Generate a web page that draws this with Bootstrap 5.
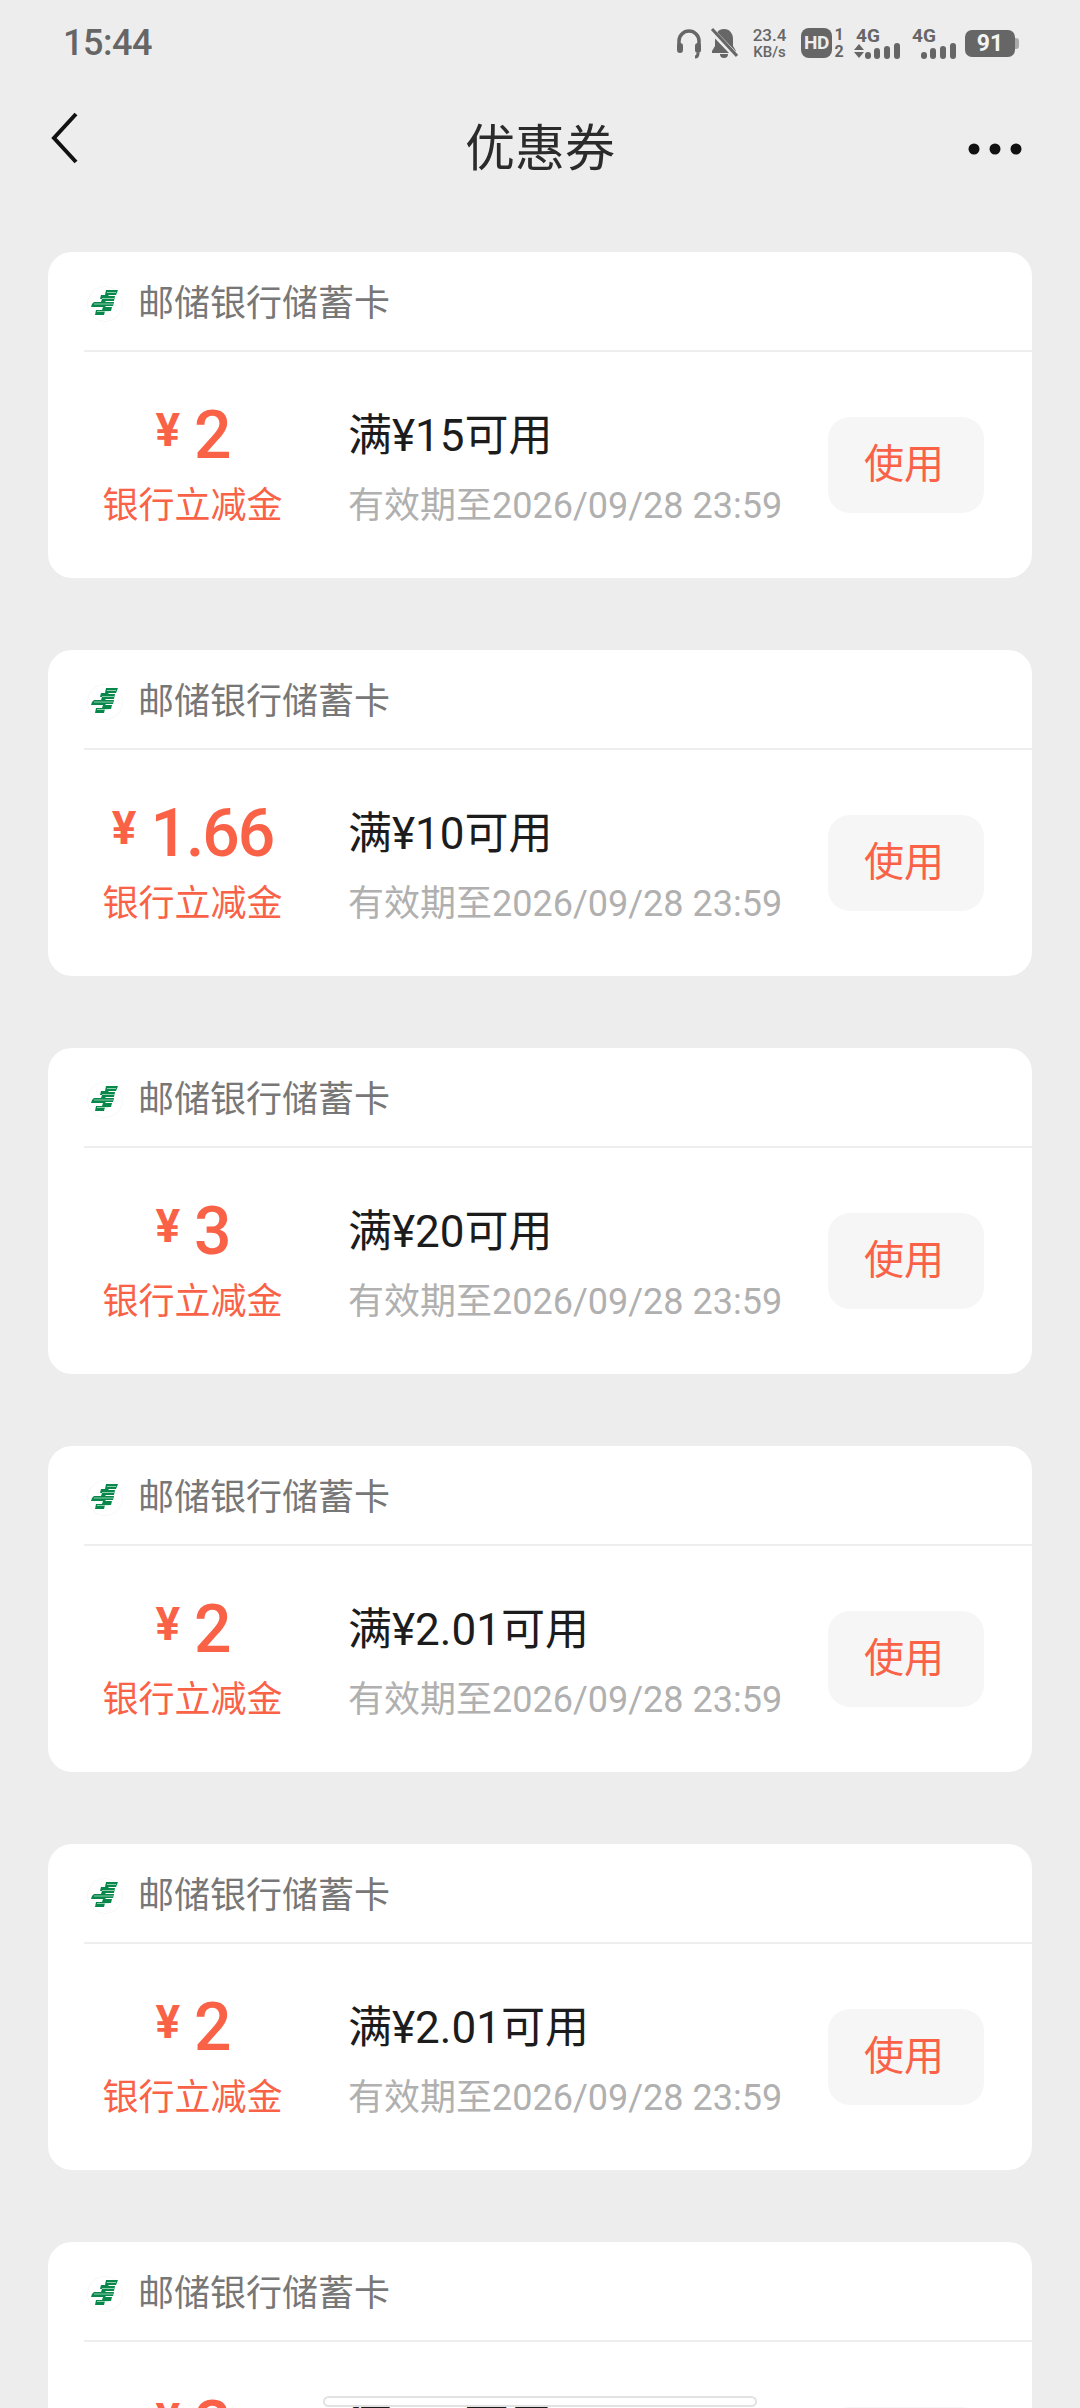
<!DOCTYPE html>
<html lang="zh">

<head>
    <meta charset="utf-8">
    <title>优惠券</title>
    <link href="https://cdn.jsdelivr.net/npm/bootstrap@5.3.0/dist/css/bootstrap.min.css" rel="stylesheet">
    <style>
        body {
            width: 1080px;
            height: 2408px;
            overflow: hidden;
            background: #ededed;
            font-family: Roboto, "Noto Sans CJK SC", sans-serif;
        }

        .status-bar {
            height: 84px;
            padding: 0 61px 0 63px;
            color: #666;
        }

        .status-time {
            font-size: 36px;
            font-weight: 500;
            line-height: 1;
            letter-spacing: -0.5px;
            margin-top: 2px;
        }

        .status-icons {
            height: 32px;
            margin-top: 2px;
            color: #666;
        }

        .net-speed {
            font-size: 17px;
            font-weight: 500;
            line-height: 16px;
            width: 37px;
            margin: 0 13px;
            text-align: center;
        }

        .net-speed span {
            font-size: 15px;
        }

        .hd-box {
            width: 31px;
            height: 30px;
            border-radius: 8px;
            background: #666;
            color: #ededed;
            font-size: 19px;
            font-weight: 700;
            letter-spacing: -0.5px;
        }

        .sim-nums {
            font-size: 16px;
            font-weight: 700;
            line-height: 17px;
            width: 12px;
            margin: 0 9px 0 1px;
            text-align: center;
        }

        .net-type {
            font-size: 19px;
            font-weight: 700;
            line-height: 15px;
            width: 46px;
            padding-left: 2px;
        }

        .net-type svg {
            margin-left: -2px;
        }

        .battery {
            width: 50px;
            height: 27px;
            border-radius: 7px;
            background: #666;
            color: #f4f4f4;
            font-size: 23px;
            font-weight: 700;
            line-height: 1;
            margin-left: 11px;
        }

        .battery-tip {
            width: 4px;
            height: 11px;
            background: #aaa;
            border-radius: 0 3px 3px 0;
        }

        .nav-row {
            height: 130px;
            padding: 0 58px 0 50px;
        }

        .nav-back {
            margin-bottom: 22px;
        }

        .nav-title {
            font-size: 50px;
            line-height: 1;
            color: #2b2b2b;
        }

        .coupon-list {
            padding: 38px 48px 0;
            gap: 72px;
        }

        .coupon-box {
            height: 326px;
            flex-shrink: 0;
            background: #fff;
            border-radius: 24px;
        }

        .bank-row {
            height: 100px;
            margin-left: 36px;
            padding: 6px 0 0 3px;
            border-bottom: 2px solid #eee;
            gap: 15px;
        }

        .bank-name {
            font-size: 36px;
            line-height: 1;
            color: #777;
        }

        .coupon-body {
            height: 226px;
            padding-left: 36px;
            padding-right: 48px;
        }

        .amount-col {
            width: 217px;
            margin-right: 47px;
            padding-top: 49px;
            color: #fa6248;
        }

        .info-col {
            padding-top: 49px;
        }

        .text-line {
            height: 70px;
            white-space: nowrap;
        }

        .yen-sign {
            font-size: 46px;
            font-weight: 700;
            line-height: 1;
            margin-top: 6px;
            margin-right: 14px;
        }

        .amount-num {
            font-size: 66px;
            font-weight: 500;
            line-height: 70px;
            letter-spacing: -2px;
        }

        .amount-label {
            font-size: 36px;
            line-height: 1;
        }

        .rule-text {
            font-size: 44px;
            line-height: 1;
            color: #1c1c1c;
        }

        .expire-text {
            font-size: 36px;
            line-height: 1;
            color: #b0b0b0;
        }

        .use-btn {
            width: 156px;
            height: 96px;
            border: 0;
            border-radius: 22px;
            background: #f6f6f6;
            color: #fa6248;
            font-size: 40px;
            line-height: 1;
            padding: 0 4px 0 0;
        }

        .float-pill {
            left: 323px;
            top: 2396px;
            width: 434px;
            height: 11px;
            background: #fff;
            border: 2px solid #e2e2e2;
            border-radius: 6px;
        }
    </style>
</head>

<body class="position-relative">

    <svg width="0" height="0" class="position-absolute">
        <symbol id="post-logo" viewBox="0 0 36 36">
            <circle cx="18" cy="18" r="17.5" fill="#fff" stroke="#f7f7f7" />
            <path fill="#07884a"
                d="M19 4h12l-2 5H22l-1 1h7l-1 5h-8l-1 1h9l-1 4h-7l-1 1h7l-1 4h-6l-1 4H8l1-5h6l1-3H4l1-3 2-2h7l1-3h-2l1-4h4z" />
            <path stroke="#cfeadb" stroke-width="0.7" fill="none" d="M20 6.500h9M15 12.500h12M7 18h19M10 25.500h12" />
        </symbol>
    </svg>

    <!-- Status bar -->
    <div class="status-bar d-flex align-items-center justify-content-between">
        <div class="status-time">15:44</div>
        <div class="status-icons d-flex align-items-center">
            <svg width="26" height="31" viewBox="0 0 26 31" class="me-2">
                <path d="M3 19V13a10 10 0 0 1 20 0v6" fill="none" stroke="#666" stroke-width="3.500" />
                <rect x="1" y="15" width="6" height="10" rx="3" fill="#666" />
                <rect x="19" y="15" width="6" height="10" rx="3" fill="#666" />
                <path d="M22 25c0 3-1 4-3 4" fill="none" stroke="#666" stroke-width="3" />
            </svg>
            <svg width="28" height="30" viewBox="0 0 28 30">
                <path d="M14 1c-6 0-9 5-9 10v7l-3 5v2h24v-2l-3-5v-7c0-5-3-10-9-10z" fill="#666" />
                <path d="M10 26h8a4 4 0 0 1-8 0z" fill="#666" />
                <path d="M1 2l26 27" stroke="#ededed" stroke-width="6" />
                <path d="M2 1l25 27" stroke="#666" stroke-width="3" />
            </svg>
            <div class="net-speed">23.4<br><span>KB/s</span></div>
            <div class="hd-box d-flex align-items-center justify-content-center">HD</div>
            <div class="sim-nums">1<br>2</div>
            <div class="net-type">4G
                <svg width="46" height="16" viewBox="0 0 46 16" class="d-block">
                    <path d="M5 1l5 6H0zM5 15L0 9h10z" fill="#666" />
                    <rect x="11" y="9" width="6" height="7" rx="3" fill="#666" />
                    <rect x="20" y="5" width="6" height="11" rx="3" fill="#666" />
                    <rect x="30" y="3" width="6" height="13" rx="3" fill="#666" />
                    <rect x="40" y="0" width="6" height="16" rx="3" fill="#666" />
                </svg>
            </div>
            <div class="net-type ms-2 ps-1">4G
                <svg width="46" height="16" viewBox="0 0 46 16" class="d-block">
                    <rect x="11" y="9" width="6" height="7" rx="3" fill="#666" />
                    <rect x="20" y="5" width="6" height="11" rx="3" fill="#666" />
                    <rect x="30" y="3" width="6" height="13" rx="3" fill="#666" />
                    <rect x="40" y="0" width="6" height="16" rx="3" fill="#666" />
                </svg>
            </div>
            <div class="battery d-flex align-items-center justify-content-center">91</div>
            <div class="battery-tip"></div>
        </div>
    </div>

    <!-- Title row -->
    <div class="nav-row position-relative d-flex align-items-center justify-content-between">
        <svg width="28" height="52" viewBox="0 0 28 52" class="nav-back">
            <path d="M26 2L4 26l22 24" fill="none" stroke="#111" stroke-width="4" />
        </svg>
        <div class="nav-title position-absolute top-50 start-50 translate-middle">优惠券</div>
        <svg width="54" height="12" viewBox="0 0 54 12">
            <circle cx="6" cy="6" r="5.500" fill="#111" />
            <circle cx="27" cy="6" r="5.500" fill="#111" />
            <circle cx="48" cy="6" r="5.500" fill="#111" />
        </svg>
    </div>

    <!-- Coupons -->
    <div class="coupon-list d-flex flex-column">

        <div class="coupon-box">
            <div class="bank-row d-flex align-items-center">
                <svg width="36" height="36"><use href="#post-logo" /></svg>
                <div class="bank-name">邮储银行储蓄卡</div>
            </div>
            <div class="coupon-body d-flex">
                <div class="amount-col">
                    <div class="text-line d-flex justify-content-center"><span class="yen-sign">¥</span><span class="amount-num">2</span></div>
                    <div class="text-line amount-label d-flex align-items-center justify-content-center">银行立减金</div>
                </div>
                <div class="info-col flex-grow-1">
                    <div class="text-line rule-text d-flex align-items-center">满¥15可用</div>
                    <div class="text-line expire-text d-flex align-items-center">有效期至2026/09/28 23:59</div>
                </div>
                <button class="use-btn btn align-self-center" type="button">使用</button>
            </div>
        </div>

        <div class="coupon-box">
            <div class="bank-row d-flex align-items-center">
                <svg width="36" height="36"><use href="#post-logo" /></svg>
                <div class="bank-name">邮储银行储蓄卡</div>
            </div>
            <div class="coupon-body d-flex">
                <div class="amount-col">
                    <div class="text-line d-flex justify-content-center"><span class="yen-sign">¥</span><span class="amount-num">1.66</span></div>
                    <div class="text-line amount-label d-flex align-items-center justify-content-center">银行立减金</div>
                </div>
                <div class="info-col flex-grow-1">
                    <div class="text-line rule-text d-flex align-items-center">满¥10可用</div>
                    <div class="text-line expire-text d-flex align-items-center">有效期至2026/09/28 23:59</div>
                </div>
                <button class="use-btn btn align-self-center" type="button">使用</button>
            </div>
        </div>

        <div class="coupon-box">
            <div class="bank-row d-flex align-items-center">
                <svg width="36" height="36"><use href="#post-logo" /></svg>
                <div class="bank-name">邮储银行储蓄卡</div>
            </div>
            <div class="coupon-body d-flex">
                <div class="amount-col">
                    <div class="text-line d-flex justify-content-center"><span class="yen-sign">¥</span><span class="amount-num">3</span></div>
                    <div class="text-line amount-label d-flex align-items-center justify-content-center">银行立减金</div>
                </div>
                <div class="info-col flex-grow-1">
                    <div class="text-line rule-text d-flex align-items-center">满¥20可用</div>
                    <div class="text-line expire-text d-flex align-items-center">有效期至2026/09/28 23:59</div>
                </div>
                <button class="use-btn btn align-self-center" type="button">使用</button>
            </div>
        </div>

        <div class="coupon-box">
            <div class="bank-row d-flex align-items-center">
                <svg width="36" height="36"><use href="#post-logo" /></svg>
                <div class="bank-name">邮储银行储蓄卡</div>
            </div>
            <div class="coupon-body d-flex">
                <div class="amount-col">
                    <div class="text-line d-flex justify-content-center"><span class="yen-sign">¥</span><span class="amount-num">2</span></div>
                    <div class="text-line amount-label d-flex align-items-center justify-content-center">银行立减金</div>
                </div>
                <div class="info-col flex-grow-1">
                    <div class="text-line rule-text d-flex align-items-center">满¥2.01可用</div>
                    <div class="text-line expire-text d-flex align-items-center">有效期至2026/09/28 23:59</div>
                </div>
                <button class="use-btn btn align-self-center" type="button">使用</button>
            </div>
        </div>

        <div class="coupon-box">
            <div class="bank-row d-flex align-items-center">
                <svg width="36" height="36"><use href="#post-logo" /></svg>
                <div class="bank-name">邮储银行储蓄卡</div>
            </div>
            <div class="coupon-body d-flex">
                <div class="amount-col">
                    <div class="text-line d-flex justify-content-center"><span class="yen-sign">¥</span><span class="amount-num">2</span></div>
                    <div class="text-line amount-label d-flex align-items-center justify-content-center">银行立减金</div>
                </div>
                <div class="info-col flex-grow-1">
                    <div class="text-line rule-text d-flex align-items-center">满¥2.01可用</div>
                    <div class="text-line expire-text d-flex align-items-center">有效期至2026/09/28 23:59</div>
                </div>
                <button class="use-btn btn align-self-center" type="button">使用</button>
            </div>
        </div>

        <div class="coupon-box">
            <div class="bank-row d-flex align-items-center">
                <svg width="36" height="36"><use href="#post-logo" /></svg>
                <div class="bank-name">邮储银行储蓄卡</div>
            </div>
            <div class="coupon-body d-flex">
                <div class="amount-col">
                    <div class="text-line d-flex justify-content-center"><span class="yen-sign">¥</span><span class="amount-num">2</span></div>
                    <div class="text-line amount-label d-flex align-items-center justify-content-center">银行立减金</div>
                </div>
                <div class="info-col flex-grow-1">
                    <div class="text-line rule-text d-flex align-items-center">满¥15可用</div>
                    <div class="text-line expire-text d-flex align-items-center">有效期至2026/09/28 23:59</div>
                </div>
                <button class="use-btn btn align-self-center" type="button">使用</button>
            </div>
        </div>

    </div>

    <div class="float-pill position-absolute"></div>

    <script src="https://cdn.jsdelivr.net/npm/bootstrap@5.3.0/dist/js/bootstrap.bundle.min.js"></script>
</body>

</html>
